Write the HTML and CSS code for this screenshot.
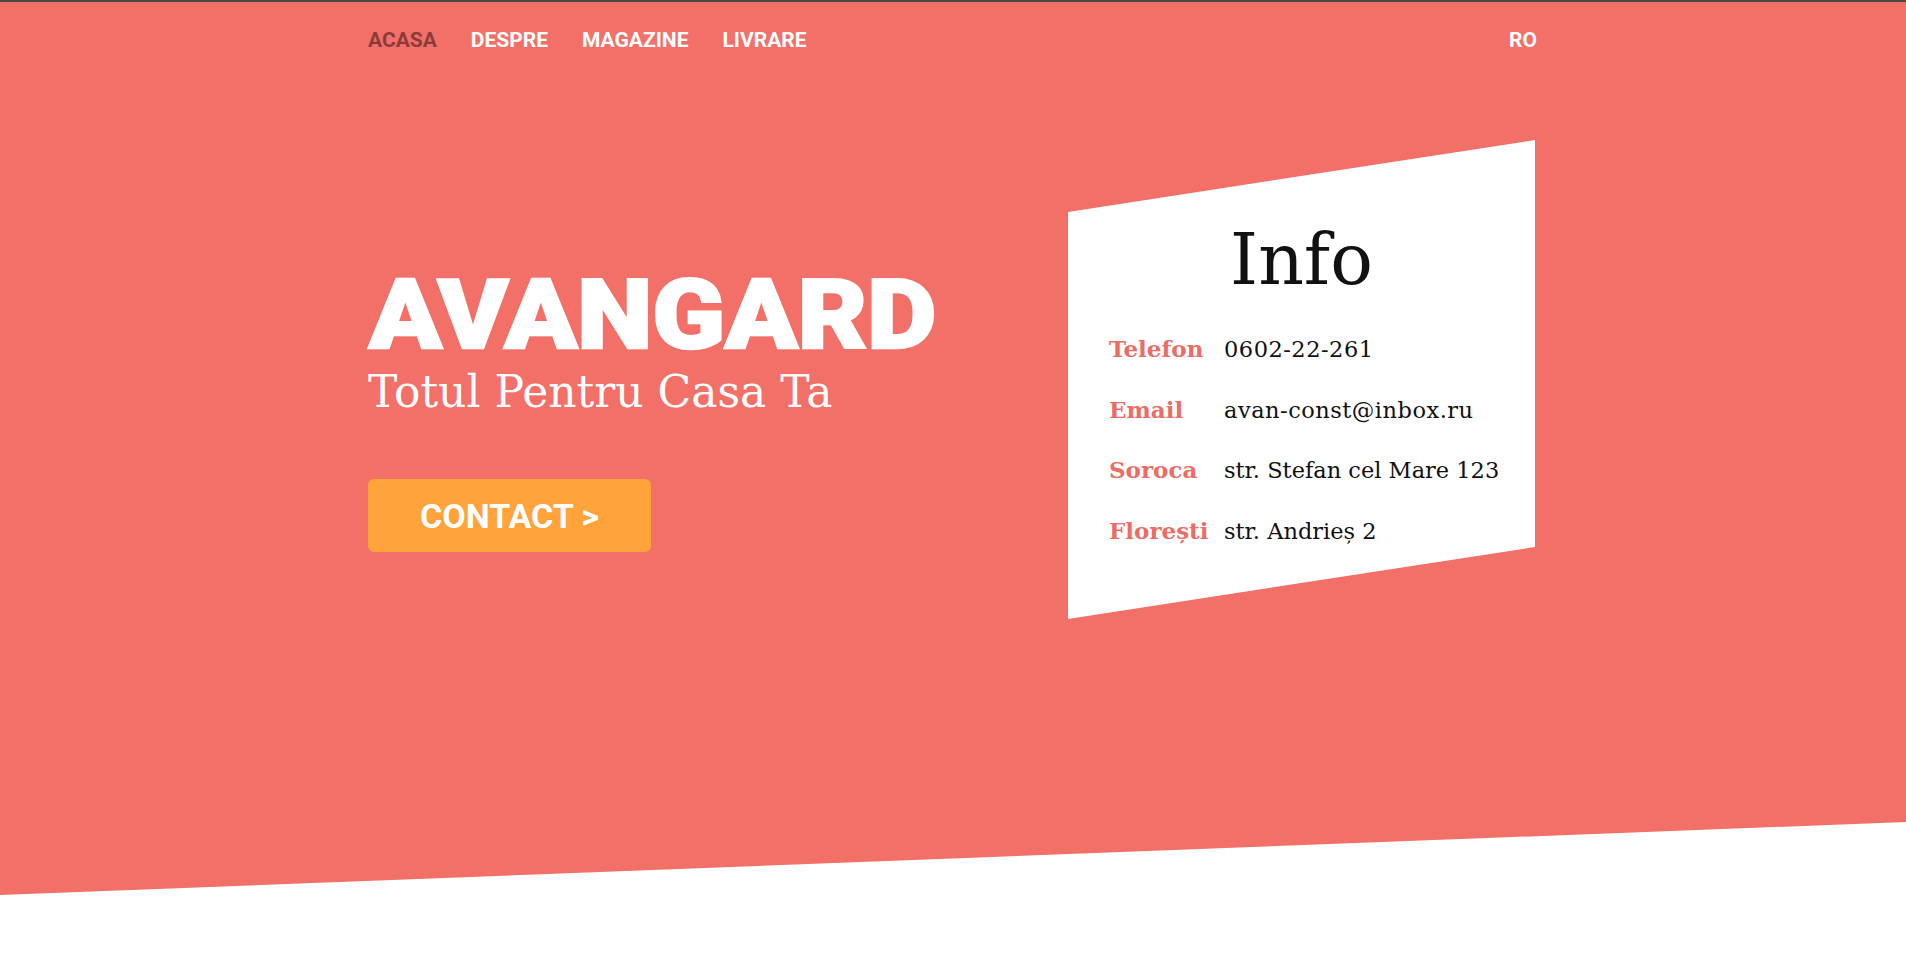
FILE: index.html
```html
<!DOCTYPE html>
<html lang="ro">
<head>
<meta charset="utf-8">
<title>Avangard</title>
<link rel="stylesheet" href="styles.css">
</head>
<body>
<header class="hero">
  <div class="container">
    <nav class="nav">
      <ul class="nav-links">
        <li><a class="nav-link active" href="#">ACASA</a></li>
        <li><a class="nav-link" href="#">DESPRE</a></li>
        <li><a class="nav-link" href="#">MAGAZINE</a></li>
        <li><a class="nav-link" href="#">LIVRARE</a></li>
      </ul>
      <a class="nav-link lang" href="#">RO</a>
    </nav>
    <div class="hero-main">
      <div class="brand">
        <h1 class="logo">AVANGARD</h1>
        <p class="tagline">Totul Pentru Casa Ta</p>
        <a class="btn-contact" href="#">CONTACT &gt;</a>
      </div>
      <aside class="info-card">
        <h2 class="info-title">Info</h2>
        <dl class="info-list">
          <div class="info-row"><dt>Telefon</dt><dd>0602-22-261</dd></div>
          <div class="info-row"><dt>Email</dt><dd>avan-const@inbox.ru</dd></div>
          <div class="info-row"><dt>Soroca</dt><dd>str. Stefan cel Mare 123</dd></div>
          <div class="info-row"><dt>Florești</dt><dd>str. Andrieș 2</dd></div>
        </dl>
      </aside>
    </div>
  </div>
</header>
</body>
</html>
```

FILE: styles.css
```css
* { box-sizing: border-box; }
html, body { margin: 0; padding: 0; }
body {
  background: #ffffff;
  height: 969px;
  overflow: hidden;
  font-family: Roboto, "Liberation Sans", sans-serif;
}
.hero {
  height: 895px;
  background: #f27068;
  border-top: 2px solid #4a4a4a;
  clip-path: polygon(0 0, 100% 0, 100% 822px, 0 100%);
}
.container {
  width: 1170px;
  margin: 0 auto;
}
.nav {
  display: flex;
  justify-content: space-between;
  padding-top: 28px;
}
.nav-links {
  display: flex;
  gap: 34px;
  list-style: none;
  margin: 0;
  padding: 0;
}
.nav-link {
  display: block;
  font-family: Roboto, sans-serif;
  font-weight: 700;
  font-size: 21px;
  line-height: 21px;
  color: #ffffff;
  text-decoration: none;
}
.nav-link.active { color: #8c3b3b; }
.lang { margin-right: 1px; }

.hero-main {
  display: grid;
  grid-template-columns: 1fr 470px;
  margin-top: 89px;
}
.brand {
  padding-top: 127px;
  display: flex;
  flex-direction: column;
  align-items: flex-start;
}
.logo {
  margin: 0;
  font-family: Roboto, sans-serif;
  font-weight: 900;
  font-size: 96px;
  line-height: 96px;
  color: #ffffff;
  -webkit-text-stroke: 2.5px #ffffff;
  transform: scaleX(1.112);
  transform-origin: left center;
  padding-left: 1px;
}
.tagline {
  margin: 7px 0 0;
  font-family: "DejaVu Serif", serif;
  font-size: 44px;
  line-height: 44px;
  color: #ffffff;
}
.btn-contact {
  margin-top: 65px;
  width: 283px;
  height: 73px;
  border-radius: 6px;
  background: #ffa33a;
  color: #ffffff;
  display: flex;
  align-items: center;
  justify-content: center;
  font-family: Roboto, sans-serif;
  font-weight: 700;
  font-size: 34px;
  line-height: 1;
  text-decoration: none;
}
.info-card {
  height: 479px;
  margin-right: 3px;
  background: #ffffff;
  clip-path: polygon(0 72px, 100% 0, 100% calc(100% - 72px), 0 100%);
  padding: 84px 0 0 41px;
}
.info-title {
  margin: 0 0 24px -41px;
  text-align: center;
  font-family: "DejaVu Serif", serif;
  font-weight: 400;
  font-size: 71px;
  line-height: 71px;
  color: #111111;
}
.info-list { margin: 0; }
.info-row {
  display: flex;
  align-items: baseline;
  height: 60.7px;
  line-height: 60.7px;
  font-family: "DejaVu Serif", serif;
}
.info-row dt {
  width: 115px;
  font-weight: 700;
  font-size: 23px;
  color: #ec6d65;
}
.info-row dd {
  margin: 0;
  font-size: 22.5px;
  color: #111111;
}
.info-row:first-child dd,
.info-row:nth-child(2) dd {
  letter-spacing: 0.5px;
}
```
